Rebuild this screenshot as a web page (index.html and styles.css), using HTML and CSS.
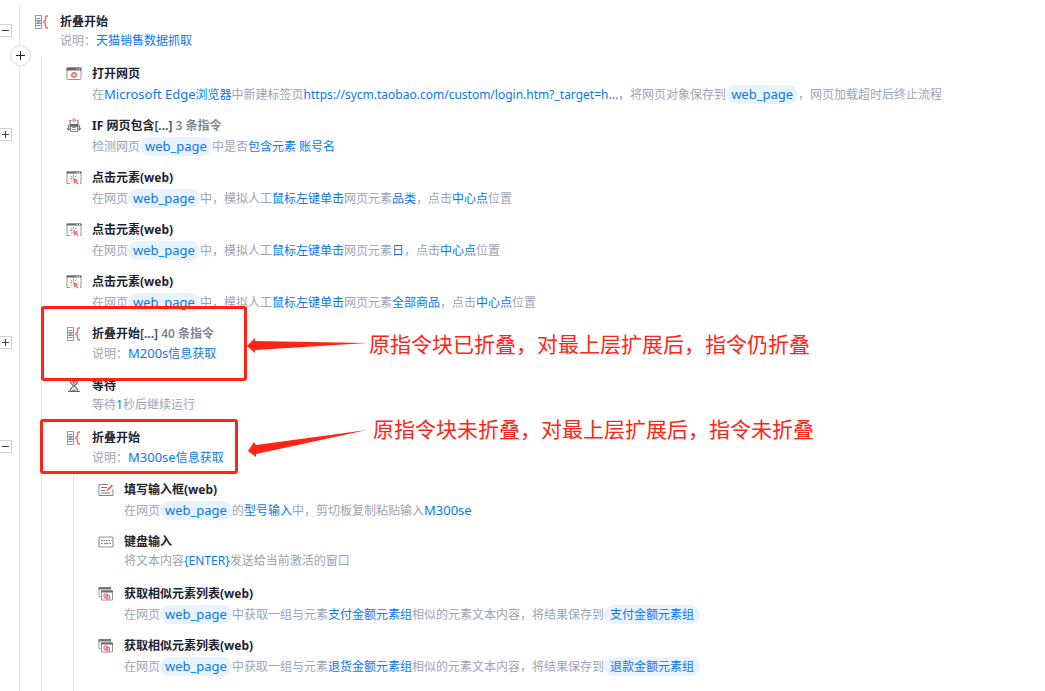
FILE: index.html
```html
<!DOCTYPE html>
<html lang="zh-CN">
<head>
    <meta charset="UTF-8">
    <meta name="viewport" content="width=device-width, initial-scale=1.0">
    <title>指令流程</title>
    <link rel="stylesheet" href="styles.css">
</head>
<body>
    <!-- Shared icons -->
    <svg class="sprite" aria-hidden="true">
        <symbol id="icon-fold" viewBox="0 0 16 16">
            <path d="M1.500 1.500h6v5h-6zM1.500 9.500h6v5h-6zM1.500 6v4M7.500 6v4" fill="none" stroke="#95969b"/>
            <path d="M2.500 4.500h4M2.500 8h4M2.500 11.500h4" stroke="#85868c"/>
            <path d="M4.500 6v4" stroke="#85868c"/>
            <path d="M14 2h-1q-1.500 0-1.500 1.500V6.500L9.800 8l1.700 1.500V12.500q0 1.500 1.500 1.500h1" fill="none" stroke="#f76a6a" stroke-width="1.500"/>
        </symbol>
        <symbol id="icon-page" viewBox="0 0 16 16">
            <rect x="1" y="2" width="14" height="11.500" rx="1" fill="#fff" stroke="#95969b"/>
            <path d="M.500 1.500h15v3H.500z" fill="#66676f"/>
            <path d="M10.500 2.500h1v1h-1zM13 2.500h1v1h-1z" fill="#fff"/>
            <circle cx="8" cy="9" r="2.300" fill="#ffd5d5" stroke="#fa6c6c" stroke-width="1.500"/>
        </symbol>
        <symbol id="icon-if" viewBox="0 0 16 16">
            <path d="M5.500 2.500H4v4M10.500 2.500H12v4M2.500 11V7M13.500 11V7M1 10l1.500 2L4 10.500M12 10.500l1.500 1.500L15 10" fill="none" stroke="#85868c" stroke-width="1.200"/>
            <path d="M3.500 6h9v3.500h-9z" fill="#66676f"/>
            <path d="M4.500 8.500h7v5h-7z" fill="#fff" stroke="#85868c"/>
            <path d="M6 9.500h4M6 11.500h4" stroke="#fa6c6c"/>
            <circle cx="8" cy="2" r="1.300" fill="#fff" stroke="#fa6c6c"/>
        </symbol>
        <symbol id="icon-click" viewBox="0 0 16 16">
            <path d="M4 13.500H1V2h14v11.500h-1" fill="none" stroke="#95969b"/>
            <path d="M.500 1.500h15v2H.500z" fill="#66676f"/>
            <path d="M10.500 2h1v1h-1zM13 2h1v1h-1z" fill="#fff"/>
            <path d="M7.500 5v2M4 8.500h2M5 6l1.500 1.500M10.500 5.500 9 7M5 11.500l1.500-1.500" stroke="#fa6c6c"/>
            <path d="m7 8 5.500 2-2 1 2 2.500-1 1-2-2.500-1 2z" fill="#f76a6a"/>
        </symbol>
        <symbol id="icon-wait" viewBox="0 0 16 16">
            <path d="M2 2h12M2 13.500h12M4 2q0 3.500 4 6 4-2.500 4-6M4 13.500q0-3 4-5.500 4 2.500 4 5.500" fill="none" stroke="#66676f" stroke-width="1.200"/>
            <path d="M4.500 2.500h7L8 7z" fill="#f76a6a"/>
            <path d="m5 13 3-2 3 2z" fill="#85868c"/>
        </symbol>
        <symbol id="icon-write" viewBox="0 0 16 16">
            <path d="M10 2.500H1v11h14V7" fill="none" stroke="#85868c"/>
            <path d="M3 5.500h6M3 8.500h4M3 11h9" stroke="#77787f"/>
            <path d="m8.500 9 .500-2 4.500-4.500L15 4l-4.500 4.500z" fill="#f76a6a"/>
        </symbol>
        <symbol id="icon-keyboard" viewBox="0 0 16 16">
            <rect x="1" y="3" width="14" height="10" rx="1" fill="none" stroke="#95969b" stroke-width="1.200"/>
            <path d="M3 6.500h10.500M3 9.500h2M11.500 9.500h2" stroke="#66676f" stroke-dasharray="1.500 1"/>
            <path d="M6 9.500h4.500" stroke="#fa6c6c" stroke-width="1.300"/>
        </symbol>
        <symbol id="icon-list" viewBox="0 0 16 16">
            <path d="M2.500 10.500H1V2h11.500v2" fill="none" stroke="#95969b"/>
            <path d="M.500 1h12.500v2.500H.500z" fill="#77787f"/>
            <path d="M3.500 5h11v9h-11z" fill="#fff" stroke="#95969b"/>
            <path d="M3 4.500h12v2H3z" fill="#66676f"/>
            <path d="M6 8h3.500v3.500H6zM8 9.500h3.500V13H8z" fill="#ffd0d0" stroke="#f76a6a"/>
        </symbol>
    </svg>

    <main class="flow">
        <!-- Fold toggles, one slot per row -->
        <div class="gutter">
            <div class="slot"><button class="toggle minus" aria-label="折叠"></button></div>
            <div class="slot"></div>
            <div class="slot"><button class="toggle plus" aria-label="展开"></button></div>
            <div class="slot"></div>
            <div class="slot"></div>
            <div class="slot"></div>
            <div class="slot"><button class="toggle plus" aria-label="展开"></button></div>
            <div class="slot"></div>
            <div class="slot"><button class="toggle minus" aria-label="折叠"></button></div>
        </div>

        <div class="tree">
            <button class="add" aria-label="添加指令"></button>
            <section class="step">
                <svg class="icon"><use href="#icon-fold"/></svg>
                <h3>折叠开始</h3>
                <p>说明：<a href="#">天猫销售数据抓取</a></p>
            </section>

            <div class="children">
                <section class="step">
                    <svg class="icon"><use href="#icon-page"/></svg>
                    <h3>打开网页</h3>
                    <p>在<a href="#"><span class="en">Microsoft Edge</span>浏览器</a>中新建标签页<a href="#">https://sycm.taobao.com/custom/login.htm?_target=h...</a>，将网页对象保存到<a href="#" class="tag en">web_page</a>，网页加载超时后终止流程</p>
                </section>
                <section class="step">
                    <svg class="icon"><use href="#icon-if"/></svg>
                    <h3>IF 网页包含<span class="dots">[...]</span> <span class="count">3 条指令</span></h3>
                    <p>检测网页<a href="#" class="tag en">web_page</a>中是否<a href="#">包含元素</a> <a href="#">账号名</a></p>
                </section>
                <section class="step">
                    <svg class="icon"><use href="#icon-click"/></svg>
                    <h3>点击元素(web)</h3>
                    <p>在网页<a href="#" class="tag en">web_page</a>中，模拟人工<a href="#">鼠标左键单击</a>网页元素<a href="#">品类</a>，点击<a href="#">中心点</a>位置</p>
                </section>
                <section class="step">
                    <svg class="icon"><use href="#icon-click"/></svg>
                    <h3>点击元素(web)</h3>
                    <p>在网页<a href="#" class="tag en">web_page</a>中，模拟人工<a href="#">鼠标左键单击</a>网页元素<a href="#">日</a>，点击<a href="#">中心点</a>位置</p>
                </section>
                <section class="step">
                    <svg class="icon"><use href="#icon-click"/></svg>
                    <h3>点击元素(web)</h3>
                    <p>在网页<a href="#" class="tag en">web_page</a>中，模拟人工<a href="#">鼠标左键单击</a>网页元素<a href="#">全部商品</a>，点击<a href="#">中心点</a>位置</p>
                </section>
                <section class="step">
                    <svg class="icon"><use href="#icon-fold"/></svg>
                    <h3>折叠开始<span class="dots">[...]</span> <span class="count">40 条指令</span></h3>
                    <p>说明：<a href="#"><span class="en">M200s</span>信息获取</a></p>
                </section>
                <section class="step">
                    <svg class="icon"><use href="#icon-wait"/></svg>
                    <h3>等待</h3>
                    <p>等待<a href="#">1</a>秒后继续运行</p>
                </section>
                <section class="step">
                    <svg class="icon"><use href="#icon-fold"/></svg>
                    <h3>折叠开始</h3>
                    <p>说明：<a href="#"><span class="en">M300se</span>信息获取</a></p>
                </section>

                <div class="children">
                    <section class="step">
                        <svg class="icon"><use href="#icon-write"/></svg>
                        <h3>填写输入框(web)</h3>
                        <p>在网页<a href="#" class="tag en">web_page</a>的<a href="#">型号输入</a>中，剪切板复制粘贴输入<a href="#" class="en">M300se</a></p>
                    </section>
                    <section class="step">
                        <svg class="icon"><use href="#icon-keyboard"/></svg>
                        <h3>键盘输入</h3>
                        <p>将文本内容<a href="#">{ENTER}</a>发送给当前激活的窗口</p>
                    </section>
                    <section class="step">
                        <svg class="icon"><use href="#icon-list"/></svg>
                        <h3>获取相似元素列表(web)</h3>
                        <p>在网页<a href="#" class="tag en">web_page</a>中获取一组与元素<a href="#">支付金额元素组</a>相似的元素文本内容，将结果保存到<a href="#" class="tag">支付金额元素组</a></p>
                    </section>
                    <section class="step">
                        <svg class="icon"><use href="#icon-list"/></svg>
                        <h3>获取相似元素列表(web)</h3>
                        <p>在网页<a href="#" class="tag en">web_page</a>中获取一组与元素<a href="#">退货金额元素组</a>相似的元素文本内容，将结果保存到<a href="#" class="tag">退款金额元素组</a></p>
                    </section>
                </div>
            </div>
        </div>

        <!-- Red notes drawn over the flow -->
        <div class="mark mark-folded"></div>
        <div class="mark mark-open"></div>
        <svg class="arrow arrow-folded" width="122" height="20" viewBox="0 0 122 20"><path d="M0 9 8 1v3l113 2L8 13v3z"/></svg>
        <svg class="arrow arrow-open" width="122" height="30" viewBox="0 0 122 30"><path d="M1 22 7 13l2 3L120 1 9 25v3z"/></svg>
        <div class="note note-folded">原指令块已折叠，对最上层扩展后，指令仍折叠</div>
        <div class="note note-open">原指令块未折叠，对最上层扩展后，指令未折叠</div>
    </main>
</body>
</html>
```
FILE: styles.css
```css
* {
    box-sizing: border-box;
}

body {
    margin: 0;
    background: #fff;
    color: #9ca3b4;
    font-family: "Noto Sans", "Noto Sans CJK SC", sans-serif;
    font-size: 12px;
    line-height: 20px;
}

a {
    color: #0a78f0;
    text-decoration: none;
}

button {
    padding: 0;
    background: #fff;
    cursor: pointer;
}

.sprite {
    display: none;
}

.flow {
    position: relative;
    display: flex;
    min-height: 100vh;
    overflow: hidden;
}

/* Left gutter */
.gutter {
    width: 19px;
    flex: none;
}

.slot {
    height: 52px;
    padding-top: 24px;
}

.toggle {
    display: block;
    width: 13px;
    height: 13px;
    margin-left: -1px;
    border: 1px solid #d2d2d2;
}

.minus {
    background: linear-gradient(#444, #444) center / 7px 1px no-repeat;
}

.plus {
    background: linear-gradient(#444, #444) center / 7px 1px no-repeat,
        linear-gradient(#444, #444) center / 1px 7px no-repeat;
}

/* Tree */
.tree,
.children {
    display: flex;
    flex-direction: column;
    flex: 1;
    background: linear-gradient(#e6e6e6, #e6e6e6) 0 5px / 1px 100% no-repeat;
}

.tree {
    position: relative;
    padding-left: 15px;
}

.children {
    margin-left: 7px;
    padding-left: 25px;
}

.add {
    position: absolute;
    top: 45px;
    left: -9px;
    width: 21px;
    height: 21px;
    border: 1px solid #dcdcdc;
    border-radius: 50%;
    background: linear-gradient(#222, #222) center / 9px 1px no-repeat,
        linear-gradient(#222, #222) center / 1px 9px no-repeat, #fff;
}

.step {
    display: grid;
    grid-template-columns: 16px 1fr;
    grid-template-rows: 20px 20px;
    column-gap: 10px;
    height: 52px;
    padding-top: 12px;
    white-space: nowrap;
}

.step h3 {
    margin: 0;
    color: #1c2230;
    font-size: 12px;
    font-weight: bold;
}

.step p {
    grid-column: 2;
    margin: 0;
    line-height: 18px;
}

.icon {
    width: 16px;
    height: 16px;
    margin-top: 2px;
}

.dots {
    color: #50545c;
}

.count {
    color: #7f8794;
    font-weight: 600;
}

.tag {
    display: inline-block;
    margin: 1px 0;
    padding: 0 6px;
    border-radius: 10px;
    background: #e9f2ff;
    line-height: 19px;
}

.en {
    font-size: 13px;
}

.tag.en {
    padding: 0 5px;
}

/* Notes */
.mark {
    position: absolute;
    border: 3px solid #ff2414;
    border-radius: 3px;
}

.mark-folded {
    top: 306px;
    left: 41px;
    width: 206px;
    height: 75px;
}

.mark-open {
    top: 419px;
    left: 40px;
    width: 198px;
    height: 55px;
}

.arrow {
    position: absolute;
    fill: #ff2414;
}

.arrow-folded {
    top: 337px;
    left: 247px;
}

.arrow-open {
    top: 429px;
    left: 247px;
}

.note {
    position: absolute;
    color: #ff2414;
    font-size: 21px;
    line-height: 28px;
    white-space: nowrap;
}

.note-folded {
    top: 330px;
    left: 369px;
}

.note-open {
    top: 415px;
    left: 373px;
}
```
